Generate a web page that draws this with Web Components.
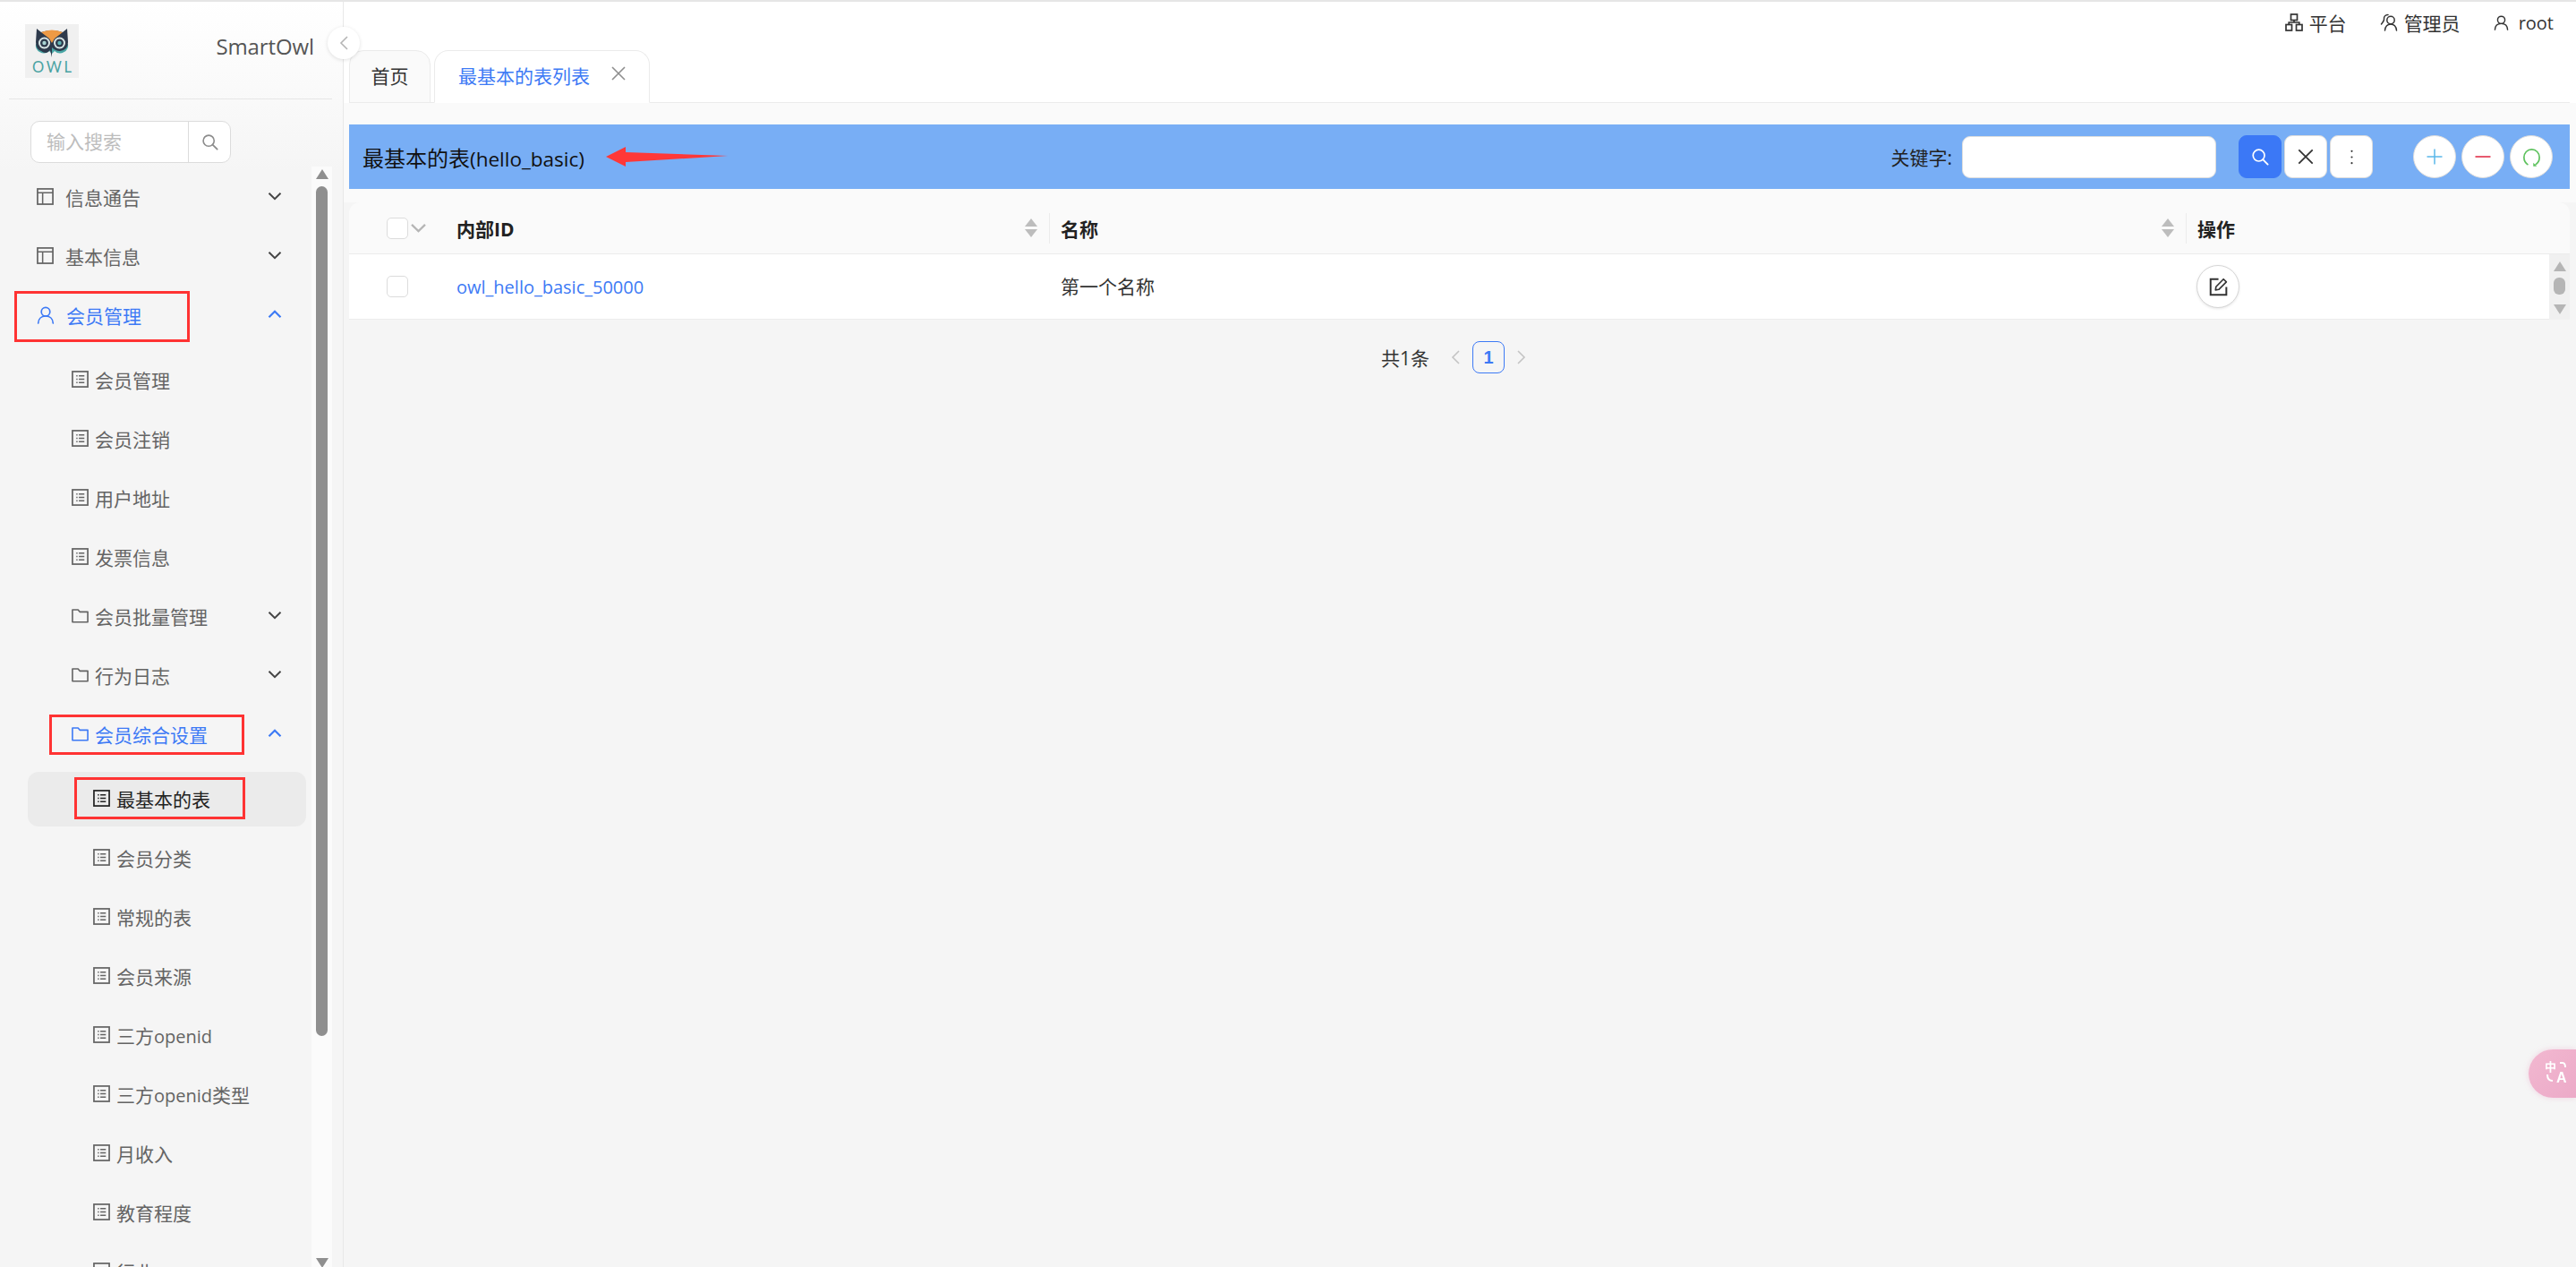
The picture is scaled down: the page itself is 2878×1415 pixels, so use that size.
<!DOCTYPE html>
<html lang="zh"><head><meta charset="utf-8"><title>SmartOwl</title>
<style>
html,body{margin:0;height:100%;overflow:hidden;background:#f5f5f5;font-family:"Open Sans","Noto Sans CJK SC",sans-serif;font-size:21px}
.la{font-size:20px}
</style></head><body>
<app-shell>
  <side-nav slot="side">
    <nav-item icon="table" level="1" arrow="down">信息通告</nav-item>
    <nav-item icon="table" level="1" arrow="down">基本信息</nav-item>
    <nav-item icon="user" level="1" arrow="up" active>会员管理</nav-item>
    <nav-group pad="6">
      <nav-item icon="list" level="2">会员管理</nav-item>
      <nav-item icon="list" level="2">会员注销</nav-item>
      <nav-item icon="list" level="2">用户地址</nav-item>
      <nav-item icon="list" level="2">发票信息</nav-item>
      <nav-item icon="folder" level="2" arrow="down">会员批量管理</nav-item>
      <nav-item icon="folder" level="2" arrow="down">行为日志</nav-item>
      <nav-item icon="folder" level="2" arrow="up" active>会员综合设置</nav-item>
    </nav-group>
    <nav-group pad="6">
      <nav-item icon="list" level="3" selected>最基本的表</nav-item>
      <nav-item icon="list" level="3">会员分类</nav-item>
      <nav-item icon="list" level="3">常规的表</nav-item>
      <nav-item icon="list" level="3">会员来源</nav-item>
      <nav-item icon="list" level="3">三方<span class="la">openid</span></nav-item>
      <nav-item icon="list" level="3">三方<span class="la">openid</span>类型</nav-item>
      <nav-item icon="list" level="3">月收入</nav-item>
      <nav-item icon="list" level="3">教育程度</nav-item>
      <nav-item icon="list" level="3">行业</nav-item>
    </nav-group>
  </side-nav>
  <top-bar slot="main"></top-bar>
  <tab-bar slot="main"></tab-bar>
  <list-header slot="main"></list-header>
  <data-table slot="main"></data-table>
  <page-nav slot="main"></page-nav>
</app-shell>
<translate-fab></translate-fab>

<script>
const ICONS = {
  table:'<rect x="1" y="1" width="18" height="18" fill="none" stroke="currentColor" stroke-width="1.8"/><path d="M1 5.500H19M7 5.500V19" fill="none" stroke="currentColor" stroke-width="1.600"/>',
  list:'<rect x="1" y="1" width="18" height="18" fill="none" stroke="currentColor" stroke-width="1.800"/><path d="M5.500 6H7M5.500 10H7M5.500 14H7M8.500 6H15M8.500 10H15M8.500 14H15" fill="none" stroke="currentColor" stroke-width="1.500"/>',
  folder:'<path d="M1 3.200H7.600L9.600 5.600H19V17.600H1Z" fill="none" stroke="currentColor" stroke-width="1.700" stroke-linejoin="round"/>',
  user:'<circle cx="10" cy="6.200" r="4.800" fill="none" stroke="currentColor" stroke-width="1.700"/><path d="M1.700 19C1.900 13.800 5.400 11 10 11S18.100 13.800 18.300 19" fill="none" stroke="currentColor" stroke-width="1.700" stroke-linecap="round"/>',
  down:'<path d="M3.500 6.800L10 13.200L16.500 6.800" fill="none" stroke="currentColor" stroke-width="2"/>',
  up:'<path d="M3.500 13.200L10 6.800L16.500 13.200" fill="none" stroke="currentColor" stroke-width="2.200"/>',
  left:'<path d="M13 3L6 10L13 17" fill="none" stroke="currentColor" stroke-width="1.600"/>',
  right:'<path d="M7 3L14 10L7 17" fill="none" stroke="currentColor" stroke-width="1.600"/>',
  search:'<circle cx="8.600" cy="8.600" r="6.400" fill="none" stroke="currentColor" stroke-width="1.700"/><path d="M13.200 13.200L18.600 18.600" fill="none" stroke="currentColor" stroke-width="1.900" stroke-linecap="round"/>',
  close:'<path d="M3 3L17 17M17 3L3 17" fill="none" stroke="currentColor" stroke-width="1.600"/>',
  more:'<circle cx="10" cy="3" r="1.100" fill="currentColor"/><circle cx="10" cy="10" r="1.100" fill="currentColor"/><circle cx="10" cy="17" r="1.100" fill="currentColor"/>',
  org:'<g fill="none" stroke="currentColor" stroke-width="1.700"><rect x="6.500" y="1" width="7" height="6.500"/><rect x="1" y="12.500" width="6.500" height="6.500"/><rect x="12.500" y="12.500" width="6.500" height="6.500"/><path d="M10 7.500V10M4.200 12.500V10H15.800V12.500"/></g>',
  admin:'<g fill="none" stroke="currentColor" stroke-width="1.500" stroke-linecap="round"><circle cx="12" cy="7.500" r="4.200"/><path d="M5.500 19C6 14.500 8.500 12 12 12S18 14.500 18.500 19"/><path d="M9 1.500C5.800 1.500 4.200 3.500 4.500 6.500C4.700 8 3.500 9.500 1.500 12"/></g>',
  edit:'<path d="M10.500 2.500H2.500V18.500H18.500V10.500" fill="none" stroke="currentColor" stroke-width="1.800"/><path d="M7.500 13.500L8 10.200L15.600 2.500L18.500 5.400L10.800 13Z" fill="none" stroke="currentColor" stroke-width="1.500" stroke-linejoin="round"/>',
  plus:'<path d="M10 1.500V18.500M1.500 10H18.500" fill="none" stroke="currentColor" stroke-width="1.500"/>',
  minus:'<path d="M1.500 10H18.500" fill="none" stroke="currentColor" stroke-width="1.800"/>',
  refresh:'<path d="M6.500 17.500C3.700 15.800 2.500 13 2.500 10.300C2.500 6 5.700 2.500 10 2.500S17.500 6 17.500 10.300C17.500 13 16.300 15.800 13.500 17.500" fill="none" stroke="currentColor" stroke-width="1.500"/><path d="M11.500 15.500V19H15Z" fill="currentColor"/>'
};
class OwIcon extends HTMLElement{
  connectedCallback(){
    const s=this.getAttribute('size')||20, n=this.getAttribute('name');
    const r=this.shadowRoot||this.attachShadow({mode:'open'});
    r.innerHTML=`<style>:host{display:inline-flex;flex:none;line-height:0}</style><svg width="${s}" height="${s}" viewBox="0 0 20 20">${ICONS[n]||''}</svg>`;
  }
}
customElements.define('ow-icon',OwIcon);

class AppShell extends HTMLElement{
  constructor(){super();this.attachShadow({mode:'open'}).innerHTML=`<style>
    :host{display:flex;height:100vh;box-sizing:border-box;border-top:2px solid #e6e6e6;overflow:hidden}
    .side{flex:none;width:384px;display:flex;min-height:0}
    .main{flex:1;min-width:0;display:flex;flex-direction:column;background:#f5f5f5}
    ::slotted(side-nav){flex:1}
  </style><div class="side"><slot name="side"></slot></div><div class="main"><slot name="main"></slot></div>`}
}
customElements.define('app-shell',AppShell);

class SideNav extends HTMLElement{
  constructor(){super();this.attachShadow({mode:'open'}).innerHTML=`<style>
    :host{display:flex;flex-direction:column;position:relative;box-sizing:border-box;border-right:1px solid #e8e8e8;background:linear-gradient(#fff,#f5f5f5 190px);min-height:0}
    .brand{flex:none;height:109px;box-sizing:border-box;margin:0 12px 0 10px;padding:25px 20px 0 18px;border-bottom:1px solid #e6e6e6;display:flex;justify-content:space-between}
    .logo{width:60px;height:60px;background:#f0f0f0;display:flex;flex-direction:column;align-items:center}
    .logo svg{display:block;margin-top:3px}
    .logo span{font:400 16.500px/17px "Lato",sans-serif;letter-spacing:2.600px;margin-right:-2.600px;color:#4aa3a3;margin-top:1px}
    .name{font-size:24px;line-height:34px;color:#555;margin-top:8px;letter-spacing:-.1px}
    .search{flex:none;margin:24px 0 4px 34px;width:224px;height:47px;box-sizing:border-box;border:1.500px solid #dcdcdc;border-radius:10px;background:#fff;display:flex}
    .search .ph{flex:1;padding-left:17px;line-height:44px;color:#bdbdbd;border-right:1.500px solid #dcdcdc}
    .search .btn{width:46px;display:flex;align-items:center;justify-content:center;color:#8c8c8c}
    .body{flex:1;min-height:0;display:flex}
    .list{flex:1;min-width:0;overflow:hidden;padding-top:2px}
    .bar{flex:none;width:23px;margin-right:12px;background:#fbfbfb;display:flex;flex-direction:column;align-items:center;position:relative}
    .ta{width:0;height:0;border:7.500px solid transparent;border-top:0;border-bottom:11px solid #8f8f8f;margin-top:3px}
    .th{width:13px;height:949px;background:#8f8f8f;border-radius:7px;margin-top:8px}
    .td{width:0;height:0;border:7.500px solid transparent;border-bottom:0;border-top:11px solid #8f8f8f;margin-top:auto;margin-bottom:-1px}
    .collapse{position:absolute;left:366px;top:28px;width:36px;height:36px;border-radius:50%;background:#fff;box-shadow:0 1px 4px rgba(0,0,0,.12);display:flex;align-items:center;justify-content:flex-start;padding-left:9px;box-sizing:border-box;color:#b5b5b5;z-index:3}
    .mark{position:absolute;box-sizing:border-box;border:3px solid #ff3333;pointer-events:none}
  </style>
  <div class="brand"><div class="logo">
    <svg width="42" height="36" viewBox="0 0 42 36">
      <path d="M3 19a9 9 0 0 0 15 8l3 3 3-3a9 9 0 0 0 15-8z" fill="#4aa7a6"/>
      <path d="M4 2l5 4q12-4 24 0l5-4 1 15q0 9-9 10-5 0-9-4l-0 11-2-8-1 1q-4 4-9 0-6-2-6-10z" fill="#2e3a4c"/>
      <path d="M9 6q12-5 24 0l-9 7-3 5-3-5z" fill="#ee9a45"/>
      <circle cx="12.500" cy="18" r="6.500" fill="#d9e5e5"/><circle cx="12.500" cy="18" r="4.500" fill="#2e3a4c"/><circle cx="12.500" cy="18" r="2.200" fill="#a9d3d3"/>
      <circle cx="29.500" cy="18" r="6.500" fill="#d9e5e5"/><circle cx="29.500" cy="18" r="4.500" fill="#2e3a4c"/><circle cx="29.500" cy="18" r="2.200" fill="#5fb3b3"/>
    </svg><span>OWL</span></div><div class="name">SmartOwl</div></div>
  <div class="search"><div class="ph">输入搜索</div><div class="btn"><ow-icon name="search" size="19"></ow-icon></div></div>
  <div class="body"><div class="list"><slot></slot></div><div class="bar"><div class="ta"></div><div class="th"></div><div class="td"></div></div></div>
  <div class="collapse"><ow-icon name="left" size="20"></ow-icon></div>
  <div class="mark" style="left:16px;top:323px;width:196px;height:57px"></div>
  <div class="mark" style="left:55px;top:796px;width:218px;height:45px"></div>
  <div class="mark" style="left:83px;top:866px;width:191px;height:47px"></div>`}
}
customElements.define('side-nav',SideNav);

class NavGroup extends HTMLElement{
  constructor(){super();this.attachShadow({mode:'open'}).innerHTML=`<style>:host{display:block}</style><slot></slot>`}
  connectedCallback(){this.style.paddingTop=(this.getAttribute('pad')||0)+'px'}
}
customElements.define('nav-group',NavGroup);

class NavItem extends HTMLElement{
  constructor(){super();this.attachShadow({mode:'open'})}
  connectedCallback(){
    const lv=this.getAttribute('level')||'1', ic=this.getAttribute('icon'), ar=this.getAttribute('arrow');
    const pad={1:41,2:80,3:104}[lv]; const gap={1:13,2:7,3:7}[lv];
    const sel=this.hasAttribute('selected'), act=this.hasAttribute('active');
    this.shadowRoot.innerHTML=`<style>
      :host{display:block;height:66px;padding:${sel?2:0}px 0;box-sizing:border-box}
      .row{height:${sel?61:66}px;box-sizing:border-box;margin-left:${sel?31:0}px;width:${sel?311:348}px;padding-left:${sel?pad-31:pad}px;display:flex;align-items:center;color:${sel?'#222':act?'#3d7af5':'#646464'};background:${sel?'#ebebeb':'none'};border-radius:12px;position:relative}
      .t{margin-left:${gap}px;font-size:21px;white-space:nowrap;line-height:30px}
      .row>ow-icon{margin-top:-3px}
      .a{position:absolute;left:${sel?270:297}px;top:50%;margin-top:-14px;color:${act?'#3d7af5':'#444'}}
    </style><div class="row"><ow-icon name="${ic}" size="${ic=='user'?20:19}"></ow-icon><span class="t"><slot></slot></span>${ar?`<span class="a"><ow-icon name="${ar}" size="20"></ow-icon></span>`:''}</div>`;
  }
}
customElements.define('nav-item',NavItem);

class TopBar extends HTMLElement{
  constructor(){super();this.attachShadow({mode:'open'}).innerHTML=`<style>
    :host{display:flex;flex:none;height:54px;background:#fff;justify-content:flex-end;padding-right:25px;box-sizing:border-box;color:#333}
    .i{display:flex;align-items:center;height:46px;margin-left:37px;gap:7px;font-size:21px}
    .i:first-child{gap:8px}
    .l{font-size:20px}
  </style>
  <div class="i"><ow-icon name="org" size="20"></ow-icon>平台</div>
  <div class="i"><ow-icon name="admin" size="20"></ow-icon>管理员</div>
  <div class="i" style="gap:11px"><ow-icon name="user" size="17"></ow-icon><span class="l">root</span></div>`}
}
customElements.define('top-bar',TopBar);

class TabBar extends HTMLElement{
  constructor(){super();this.attachShadow({mode:'open'}).innerHTML=`<style>
    :host{display:flex;flex:none;height:59px;box-sizing:border-box;background:#fff;padding-left:6px;padding-right:7px;align-items:stretch}
    .wrap{flex:1;display:flex;gap:4px;border-bottom:1.500px solid #ebebeb}
    .tab{box-sizing:border-box;height:59px;border:1.500px solid #ebebeb;border-radius:16px 16px 0 0;display:flex;align-items:center;font-size:21px;padding-bottom:4px}
    .a{width:91px;justify-content:center;background:#fafafa;color:#333;border-bottom-color:#ebebeb}
    .b{width:241px;padding-left:26px;background:#fff;color:#3d7af5;border-bottom-color:#fff;gap:22px}
    .b ow-icon{color:#8e8e8e;margin-top:-3px}
  </style><div class="wrap"><div class="tab a">首页</div><div class="tab b">最基本的表列表<ow-icon name="close" size="20"></ow-icon></div></div>`}
}
customElements.define('tab-bar',TabBar);

class ListHeader extends HTMLElement{
  constructor(){super();this.attachShadow({mode:'open'}).innerHTML=`<style>
    :host{display:block;flex:none;padding:24px 7px 15px 6px;background:#fafafa}
    .band{position:relative;height:72px;background:#78aef5;display:flex;align-items:center;padding-left:15px;padding-right:19px}
    h1{font-weight:400;font-size:24px;margin:0;color:#111;flex:1;white-space:nowrap}
    h1 span{font-size:22.500px}
    .lab{font-size:21px;color:#222;margin-right:11px}
    .inp{width:284px;height:47px;box-sizing:border-box;background:#fff;border:1px solid #ddd;border-radius:9px;margin-right:25px}
    .b{width:48px;height:48px;box-sizing:border-box;display:flex;align-items:center;justify-content:center;background:#fff;border:1px solid #dcdcdc;border-radius:9px;margin-right:3px;color:#333}
    .s{background:#3b78f6;border-color:#3b78f6;color:#fff}
    .c{border-radius:50%;margin-left:6px;margin-right:0}
    .first{margin-left:42px}
    .arrow{position:absolute;left:287px;top:24px}
  </style><div class="band"><h1>最基本的表<span>(hello_basic)</span></h1>
    <svg class="arrow" width="140" height="24" viewBox="0 0 140 24"><polygon points="0,12 22,1 22,7 136,11 22,18 22,23" fill="#ff3838"/></svg>
    <span class="lab">关键字:</span><div class="inp"></div>
    <div class="b s"><ow-icon name="search" size="20"></ow-icon></div>
    <div class="b"><ow-icon name="close" size="22"></ow-icon></div>
    <div class="b"><ow-icon name="more" size="19"></ow-icon></div>
    <div class="b c first" style="color:#5bb8ea"><ow-icon name="plus" size="20"></ow-icon></div>
    <div class="b c" style="color:#e5485f"><ow-icon name="minus" size="20"></ow-icon></div>
    <div class="b c" style="color:#5fc25f"><ow-icon name="refresh" size="23"></ow-icon></div>
  </div>`}
}
customElements.define('list-header',ListHeader);

class DataTable extends HTMLElement{
  constructor(){super();this.attachShadow({mode:'open'}).innerHTML=`<style>
    :host{display:block;flex:none;margin:0 7px 0 6px}
    .g{display:grid;grid-template-columns:110px 672px 1270px 1fr;align-items:center}
    .head{height:58px;background:#fafafa;border-bottom:1.500px solid #ececec;border-radius:12px 12px 0 0;box-sizing:border-box;font-weight:700;color:#222}
    .rowwrap{display:flex;height:73px}
    .row{flex:1;background:#fff;border-bottom:1.500px solid #ececec;box-sizing:border-box}
    .c{padding-left:13px;display:flex;align-items:center;position:relative;height:100%;box-sizing:border-box}
    .first{padding-left:42px}
    .head .c{height:34px}
    .head .c.sep::before{content:"";position:absolute;left:0;top:0;bottom:0;width:1px;background:#ececec}
    .cb{display:block;width:24px;height:24px;box-sizing:border-box;border:1.500px solid #dcdcdc;border-radius:5px;background:#fff}
    .link{color:#3d7af5;padding-left:10px;font-size:20px}
    .n{padding-left:10px}
    .sort{position:absolute;right:13px;top:50%;margin-top:-11px;display:flex;flex-direction:column;gap:3px}
    .sort i{display:block;width:0;height:0;border:7px solid transparent}
    .sort .u{border-top:0;border-bottom:9px solid #bdbdbd}.sort .d{border-bottom:0;border-top:9px solid #bdbdbd}
    .ed{width:48px;height:48px;box-sizing:border-box;border:1px solid #d6d6d6;border-radius:50%;display:flex;align-items:center;justify-content:center;margin-left:-1px;box-shadow:0 1px 3px rgba(0,0,0,.1);color:#333;background:#fff}
    .sb{flex:none;width:23px;background:#f0f0f0;display:flex;flex-direction:column;align-items:center}
    .sb .a1{width:0;height:0;border:7.500px solid transparent;border-top:0;border-bottom:11px solid #b5b5b5;margin-top:8px}
    .sb .t{width:13px;height:19px;background:#b5b5b5;border-radius:6px;margin-top:7px}
    .sb .a2{width:0;height:0;border:7.500px solid transparent;border-bottom:0;border-top:11px solid #b5b5b5;margin-top:auto;margin-bottom:6px}
  </style>
  <div class="g head">
    <div class="c first"><span class="cb"></span><ow-icon name="down" size="23" style="color:#b5b5b5"></ow-icon></div>
    <div class="c n">内部ID<span class="sort"><i class="u"></i><i class="d"></i></span></div>
    <div class="c sep">名称<span class="sort"><i class="u"></i><i class="d"></i></span></div>
    <div class="c sep">操作</div>
  </div>
  <div class="rowwrap"><div class="g row">
    <div class="c first"><span class="cb"></span></div>
    <div class="c link">owl_hello_basic_50000</div>
    <div class="c" style="color:#333;padding-bottom:2px">第一个名称</div>
    <div class="c"><div class="ed"><ow-icon name="edit" size="22"></ow-icon></div></div>
  </div><div class="sb"><div class="a1"></div><div class="t"></div><div class="a2"></div></div></div>`}
}
customElements.define('data-table',DataTable);

class PageNav extends HTMLElement{
  constructor(){super();this.attachShadow({mode:'open'}).innerHTML=`<style>
    :host{display:flex;flex:none;margin:24px 0 0 1159px;align-items:center;height:36px;color:#333}
    .n{width:36px;height:36px;box-sizing:border-box;border:1.500px solid #3d7af5;border-radius:8px;display:flex;align-items:center;justify-content:center;color:#3d7af5;font-weight:600;font-size:20px;font-family:"Liberation Sans",sans-serif;margin:0 8px}
    ow-icon{color:#c4c4c4}
    .t{margin-right:20px}
  </style><span class="t">共1条</span><ow-icon name="left" size="20"></ow-icon><div class="n">1</div><ow-icon name="right" size="20"></ow-icon>`}
}
customElements.define('page-nav',PageNav);

class TranslateFab extends HTMLElement{
  constructor(){super();this.attachShadow({mode:'open'}).innerHTML=`<style>
    :host{position:fixed;right:0;top:1172px;width:53px;height:54px;border-radius:27px 0 0 27px;background:linear-gradient(135deg,#f2b8d0,#ecaac8);box-shadow:0 0 6px rgba(230,150,190,.35);display:block;color:#fff;font:700 15px/16px "Liberation Sans","Noto Sans CJK SC",sans-serif}
    .z{position:absolute;left:18px;top:12px;font-size:13px}
    .x{position:absolute;left:31px;top:24px;font-size:16px}
    svg{position:absolute;left:18px;top:12px}
  </style><svg width="30" height="26" viewBox="0 0 30 26"><path d="M17 3H20Q23 3 23 8M3 16Q3 23 9 23" fill="none" stroke="#fff" stroke-width="2"/></svg><span class="z">中</span><span class="x">A</span>`}
}
customElements.define('translate-fab',TranslateFab);
</script>
</body></html>
